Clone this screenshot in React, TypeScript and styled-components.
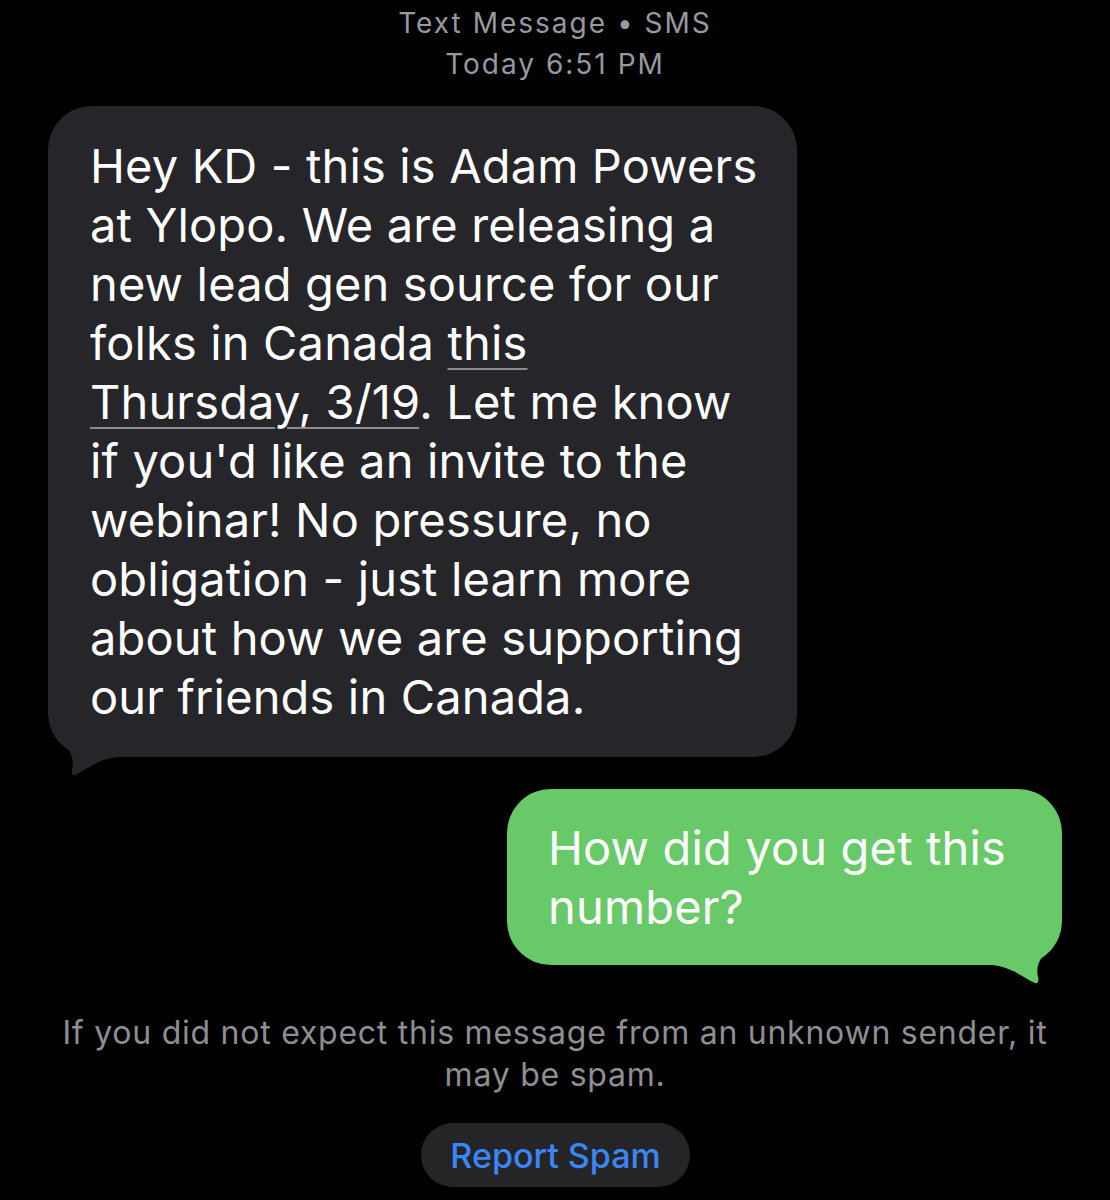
import React from "react";
import styled, { createGlobalStyle } from "styled-components";

const Global = createGlobalStyle`
  html, body { margin: 0; padding: 0; background: #000; }
  body { font-family: Inter, "Noto Sans", sans-serif; -webkit-font-smoothing: antialiased; }
`;

const Screen = styled.div`
  width: 1110px;
  height: 1200px;
  background: #000;
  overflow: hidden;
  display: flex;
  flex-direction: column;
`;

const Header = styled.div`
  display: flex;
  flex-direction: column;
  align-items: center;
  color: #98989e;
  font-size: 28px;
  line-height: 41px;
  padding-top: 3px;
  letter-spacing: 2px;
`;

const Thread = styled.div`
  display: flex;
  flex-direction: column;
  padding: 21px 48px 0 48px;
`;

const Row = styled.div<{ $out?: boolean }>`
  display: flex;
  justify-content: ${(p) => (p.$out ? "flex-end" : "flex-start")};
  margin-top: ${(p) => (p.$out ? "32px" : "0")};
`;

const Bubble = styled.div<{ $out?: boolean }>`
  position: relative;
  background: ${(p) => (p.$out ? "#68c968" : "#262529")};
  color: #fff;
  border-radius: 44px;
  font-size: 47px;
  line-height: 59px;
  letter-spacing: 0.15px;
  padding: ${(p) => (p.$out ? "29px 56px 29px 41px" : "30px 41px 31px 42px")};
  width: ${(p) => (p.$out ? "auto" : "749px")};
  box-sizing: border-box;
`;

const Line = styled.span`
  position: relative;
  z-index: 1;
  display: block;
  white-space: nowrap;
`;

const Link = styled.span`
  text-decoration: underline;
  text-decoration-color: #8a8a8e;
  text-decoration-thickness: 2px;
  text-underline-offset: 8px;
`;

const Tail = styled.svg<{ $out?: boolean }>`
  position: absolute;
  z-index: 0;
  bottom: -20px;
  ${(p) => (p.$out ? "right: 0;" : "left: 0;")}
  width: 70px;
  height: 70px;
`;

const Notice = styled.div`
  margin-top: 47px;
  text-align: center;
  color: #8e8e93;
  font-size: 32px;
  line-height: 42px;
  letter-spacing: 0.75px;
`;

const ButtonRow = styled.div`
  display: flex;
  justify-content: center;
  margin-top: 27px;
`;

const SpamButton = styled.button`
  border: none;
  background: #252528;
  color: #3b86f7;
  font-family: Inter, "Noto Sans", sans-serif;
  font-size: 34px;
  font-weight: 500;
  height: 64px;
  width: 269px;
  border-radius: 32px;
  padding: 0;
  margin-left: 1px;
`;

export default function App() {
  return (
    <Screen>
      <Global />
      <Header>
        <div>Text Message • SMS</div>
        <div>Today 6:51 PM</div>
      </Header>
      <Thread>
        <Row>
          <Bubble>
            <Line>Hey KD - this is Adam Powers</Line>
            <Line>at Ylopo. We are releasing a</Line>
            <Line>new lead gen source for our</Line>
            <Line>
              folks in Canada <Link>this</Link>
            </Line>
            <Line>
              <Link>Thursday, 3/19</Link>. Let me know
            </Line>
            <Line>if you'd like an invite to the</Line>
            <Line>webinar! No pressure, no</Line>
            <Line>obligation - just learn more</Line>
            <Line>about how we are supporting</Line>
            <Line>our friends in Canada.</Line>
            <Tail viewBox="0 0 70 70">
              <path
                d="M70 0 L0 0 C0 18 6 30 18 40 C 24 46 26 54 24 62 C 23 66 24 69 27 68 C 40 62 50 52 70 50 Z"
                fill="#262529"
              />
            </Tail>
          </Bubble>
        </Row>
        <Row $out>
          <Bubble $out>
            <Line>How did you get this</Line>
            <Line>number?</Line>
            <Tail $out viewBox="0 0 70 70">
              <path
                d="M0 0 L70 0 C70 18 64 30 52 40 C 46 46 44 54 46 62 C 47 66 46 69 43 68 C 30 62 20 52 0 50 Z"
                fill="#68c968"
              />
            </Tail>
          </Bubble>
        </Row>
      </Thread>
      <Notice>
        If you did not expect this message from an unknown sender, it
        <br />
        may be spam.
      </Notice>
      <ButtonRow>
        <SpamButton>Report Spam</SpamButton>
      </ButtonRow>
    </Screen>
  );
}
